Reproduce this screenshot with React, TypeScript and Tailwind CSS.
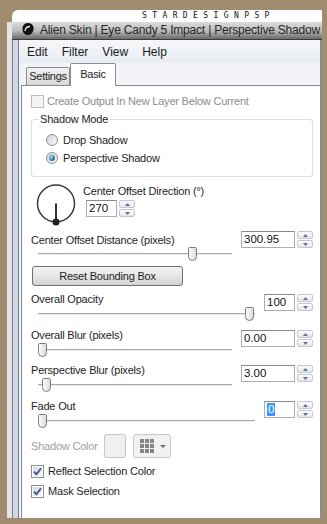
import React from 'react';

function Check({ checked = false, disabled = false }: { checked?: boolean; disabled?: boolean }) {
  return (
    <span
      className={
        disabled
          ? 'w-[13px] h-[13px] shrink-0 border border-[#bcbcbc] bg-[#f4f4f4]'
          : 'w-[13px] h-[13px] shrink-0 border border-[#8e8f8f] p-px bg-white'
      }
    >
      {!disabled && (
        <span className="w-full h-full flex items-center justify-center bg-linear-to-br from-[#d3d8e0] to-[#f7f8fa]">
          {checked && (
            <svg width="9" height="9" viewBox="0 0 9 9">
              <path d="M1 4.6 L3.4 7.4 L8 1.2" stroke="#3f5c9c" strokeWidth="1.9" fill="none" strokeLinejoin="round" />
            </svg>
          )}
        </span>
      )}
    </span>
  );
}

function Radio({ on = false }: { on?: boolean }) {
  return (
    <span className="w-[12px] h-[12px] shrink-0 rounded-full border border-[#8e8f8f] bg-linear-to-br from-[#cfd1d4] to-[#fafafa] flex items-center justify-center">
      {on && (
        <span className="w-[6px] h-[6px] rounded-full bg-[radial-gradient(circle_at_35%_35%,#9ad8f7,#1d5b8a_75%)]" />
      )}
    </span>
  );
}

function Spin() {
  return (
    <div className="w-[16px] h-[17px] flex flex-col gap-px shrink-0">
      <div className="flex-1 rounded-[2px] border border-[#c4c7cd] bg-linear-to-b from-[#fdfdfd] to-[#e3e6ea] flex items-center justify-center">
        <svg width="5" height="3" viewBox="0 0 5 3">
          <path d="M0 3 L2.5 0 L5 3 Z" fill="#5b7299" />
        </svg>
      </div>
      <div className="flex-1 rounded-[2px] border border-[#c4c7cd] bg-linear-to-b from-[#fdfdfd] to-[#e3e6ea] flex items-center justify-center">
        <svg width="5" height="3" viewBox="0 0 5 3">
          <path d="M0 0 L2.5 3 L5 0 Z" fill="#5b7299" />
        </svg>
      </div>
    </div>
  );
}

function NumBox({ value, widthClass, selected = false }: { value: string; widthClass: string; selected?: boolean }) {
  return (
    <div className="flex gap-[2px] shrink-0">
      <div
        className={`${widthClass} h-[17px] border border-[#abadb3] border-t-[#858891] bg-white flex items-center pl-[2px] text-[11.5px] tracking-normal text-[#111]`}
      >
        {selected ? <span className="bg-[#3399ff] text-white px-px leading-[13px]">{value}</span> : value}
      </div>
      <Spin />
    </div>
  );
}

function Thumb({ left }: { left: number }) {
  return (
    <svg className="absolute top-0" style={{ left }} width="9" height="14" viewBox="0 0 9 14">
      <defs>
        <linearGradient id="thumbFill" x1="0" y1="0" x2="1" y2="0">
          <stop offset="0" stopColor="#ffffff" />
          <stop offset="1" stopColor="#d9d9d9" />
        </linearGradient>
      </defs>
      <path
        d="M0.5 1.5 Q0.5 0.5 1.5 0.5 H7.5 Q8.5 0.5 8.5 1.5 V9.5 Q8.5 13.5 4.5 13.5 Q0.5 13.5 0.5 9.5 Z"
        fill="url(#thumbFill)"
        stroke="#7c7c7c"
      />
    </svg>
  );
}

function Slider({ offset }: { offset: number }) {
  return (
    <div className="relative h-[14px] pt-[6px] ml-[7px] mr-[9px]">
      <div className="h-[2px] border-t border-[#a8a8a8] bg-[#ececec]" />
      <Thumb left={offset} />
    </div>
  );
}

const rows = [
  { label: 'Overall Opacity', value: '100', wide: false, thumb: 207, gap: 'mt-[7px]' },
  { label: 'Overall Blur (pixels)', value: '0.00', wide: true, thumb: 0, gap: 'mt-[8px]' },
  { label: 'Perspective Blur (pixels)', value: '3.00', wide: true, thumb: 4, gap: 'mt-[7px]' },
  { label: 'Fade Out', value: '0', wide: false, thumb: 0, gap: 'mt-[8px]', selected: true },
];

function AlienIcon() {
  return (
    <svg className="shrink-0" width="12" height="14" viewBox="0 0 12 14">
      <path d="M6 1 C10 1 12 4 11.5 7.5 C11 11 8 13.5 5 13 C2 12.5 0.5 10 0.5 7 C0.5 3.5 2.5 1 6 1 Z" fill="#111" />
      <path d="M3 9 C3.5 6 5.5 4.5 8 4.5" stroke="#e8e8e8" strokeWidth="1.3" fill="none" />
    </svg>
  );
}

export default function App() {
  return (
    <div className="w-[327px] h-[524px] bg-[#a28c70] pt-[10px] pl-[7px] pr-[5px] pb-[6px] overflow-hidden font-['Liberation_Sans',Arial,sans-serif] text-[11px] tracking-[-0.2px] text-[#1e1e1e]">
      <div className="h-full flex flex-col">
        {/* watermark band */}
        <div className="ml-[5px] h-[12px] shrink-0 bg-white rounded-tl-[6px] pl-[130px]">
          <div className="font-['DejaVu_Sans_Mono',monospace] text-[8px] leading-[8px] mt-[2px] tracking-[5.4px] text-[#111] whitespace-nowrap">
            STARDESIGNPSP
          </div>
        </div>

        <div className="flex-1 flex min-h-0">
          <div className="w-[5px] bg-[#e5e5e5]" />
          <div className="flex-1 flex flex-col min-w-0">
            {/* title bar */}
            <div className="h-[18px] shrink-0 overflow-hidden border-b border-[#3b3b3b] bg-linear-to-b from-[#dcdcdc] via-[#bdbdbd] to-[#6a6a6a] flex pl-[10px] gap-[6px]">
              <AlienIcon />
              <div className="text-[12px] leading-[14px] pt-px text-[#262626] whitespace-nowrap">
                Alien Skin | Eye Candy 5 Impact | Perspective Shadow
              </div>
            </div>

            <div className="flex-1 flex min-h-0">
              <div className="w-[7px] border-l border-[#7b7b7b] border-r border-r-[#6e7b8e] bg-[#d0d9e6]" />

              <div className="flex-1 flex flex-col bg-[#f3f4f7] min-w-0">
                {/* menu */}
                <div className="h-[23px] shrink-0 flex items-center pl-[8px] gap-[14px] text-[12px] tracking-normal text-[#1b1b1b] bg-linear-to-b from-[#f6f7fa] to-[#e8ecf2]">
                  <span>Edit</span>
                  <span>Filter</span>
                  <span>View</span>
                  <span>Help</span>
                </div>

                {/* tabs */}
                <div className="h-[23px] shrink-0 flex items-end pl-[7px] -mb-px relative z-10 tracking-[-0.3px]">
                  <div className="w-[44px] h-[19px] border border-[#898c95] rounded-t-[2px] bg-linear-to-b from-[#f3f3f3] to-[#d8d8d8] flex justify-center pt-[2px] leading-[13px]">
                    Settings
                  </div>
                  <div className="w-[46px] h-[23px] border-x border-t border-[#898c95] rounded-t-[2px] bg-white flex justify-center pt-[4px] leading-[13px]">
                    Basic
                  </div>
                </div>

                {/* panel */}
                <div className="flex-1 ml-[2px] bg-white border-l border-t border-[#898c95] pt-[9px] pl-[9px] pr-[7px] leading-[13px]">
                  <div className="h-[13px] flex items-center gap-[3px] text-[#8d8d8d]">
                    <Check disabled />
                    <span>Create Output In New Layer Below Current</span>
                  </div>

                  <fieldset className="mt-[5px] border border-[#d5dfe5] rounded-[3px]">
                    <legend className="ml-[6px] px-[2px] leading-[13px]">Shadow Mode</legend>
                    <div className="pt-[8px] pl-[14px] pb-[12px] flex flex-col gap-[6px]">
                      <div className="h-[12px] flex items-center gap-[5px]">
                        <Radio />
                        <span>Drop Shadow</span>
                      </div>
                      <div className="h-[12px] flex items-center gap-[5px]">
                        <Radio on />
                        <span>Perspective Shadow</span>
                      </div>
                    </div>
                  </fieldset>

                  {/* dial */}
                  <div className="mt-[7px] flex items-start">
                    <svg className="ml-[5px] shrink-0" width="40" height="42" viewBox="0 0 40 42">
                      <circle cx="20" cy="19.5" r="18.5" stroke="#3a3a3a" strokeWidth="1.5" fill="none" />
                      <line x1="20" y1="19.5" x2="20" y2="38" stroke="#333" strokeWidth="2" />
                      <circle cx="20" cy="38" r="3.5" fill="#222" />
                    </svg>
                    <div className="ml-[7px] pt-px flex flex-col">
                      <span className="h-[13px]">Center Offset Direction (°)</span>
                      <div className="mt-[2px] ml-[3px]">
                        <NumBox value="270" widthClass="w-[31px]" />
                      </div>
                    </div>
                  </div>

                  {/* distance */}
                  <div className="mt-[5px] flex items-start">
                    <div className="flex-1 min-w-0 pt-[3px]">
                      <div className="h-[13px]">Center Offset Distance (pixels)</div>
                      <Slider offset={150} />
                    </div>
                    <NumBox value="300.95" widthClass="w-[54px]" />
                  </div>

                  <div className="mt-[5px] ml-px w-[151px] h-[20px] rounded-[3px] border border-[#707070] bg-linear-to-b from-[#f3f3f3] via-[#e6e6e6] to-[#d2d2d2] flex items-center justify-center">
                    Reset Bounding Box
                  </div>

                  {rows.map((r) => (
                    <div key={r.label} className={`flex items-start ${r.gap}`}>
                      <div className="flex-1 min-w-0 flex flex-col gap-px">
                        <div className="h-[13px]">{r.label}</div>
                        <Slider offset={r.thumb} />
                      </div>
                      <div className="pt-px">
                        <NumBox value={r.value} widthClass={r.wide ? 'w-[54px]' : 'w-[31px]'} selected={r.selected} />
                      </div>
                    </div>
                  ))}

                  {/* shadow color */}
                  <div className="mt-[6px] h-[24px] flex items-center">
                    <span className="w-[73px] text-[#a0a0a0]">Shadow Color</span>
                    <div className="w-[22px] h-[24px] rounded-[2px] border border-[#c9c9c9] bg-[#f0f0f0]" />
                    <div className="ml-[7px] w-[38px] h-[24px] rounded-[3px] border border-[#c9c9c9] bg-[#f1f1f1] flex items-center pl-[6px] gap-[6px]">
                      <div className="grid grid-cols-3 gap-px w-[14px] h-[14px]">
                        {Array.from({ length: 9 }).map((_, i) => (
                          <span key={i} className="bg-[#858585]" />
                        ))}
                      </div>
                      <svg width="6" height="3" viewBox="0 0 6 3">
                        <path d="M0 0 L3 3 L6 0 Z" fill="#707070" />
                      </svg>
                    </div>
                  </div>

                  <div className="mt-[7px] h-[13px] flex items-center gap-[4px]">
                    <Check checked />
                    <span>Reflect Selection Color</span>
                  </div>
                  <div className="mt-[7px] h-[13px] flex items-center gap-[4px]">
                    <Check checked />
                    <span>Mask Selection</span>
                  </div>
                </div>
              </div>

              <div className="w-[2px] bg-[#8c8c8c]" />
            </div>
          </div>
        </div>
      </div>
    </div>
  );
}
